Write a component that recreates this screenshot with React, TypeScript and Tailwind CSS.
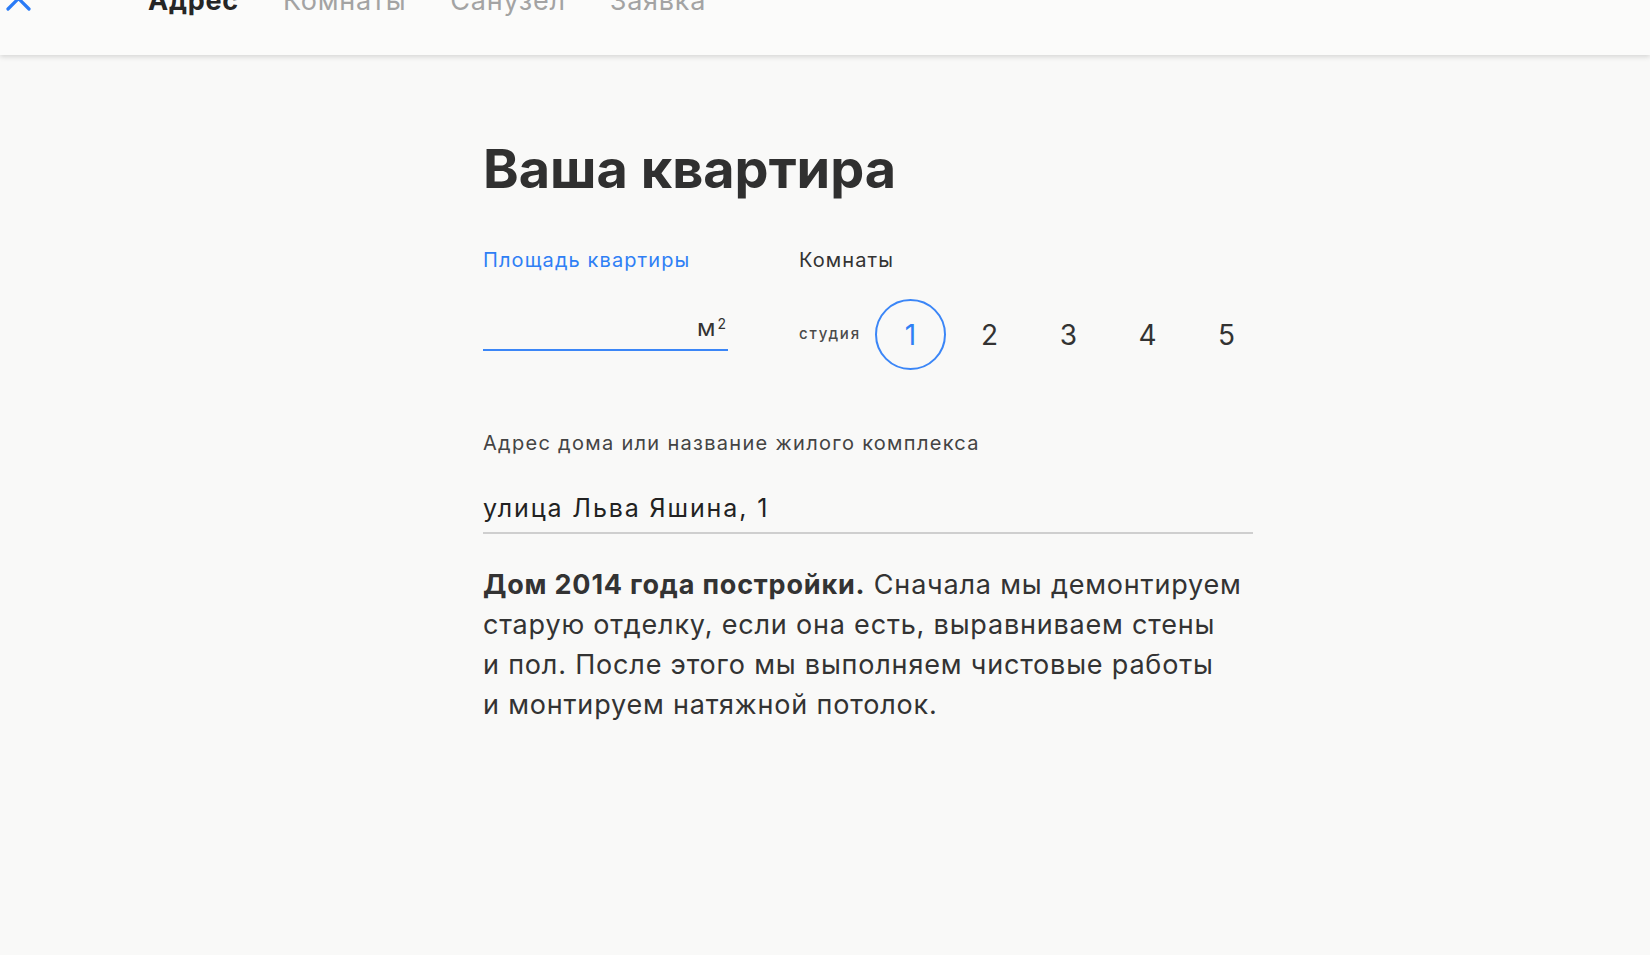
import React from "react";

const NAV = ["Адрес", "Комнаты", "Санузел", "Заявка"];
const ROOMS = ["1", "2", "3", "4", "5"];

function Header() {
  return (
    <header className="relative z-10 h-[55px] bg-[#fbfbfa] shadow-[0_2px_5px_rgba(0,0,0,0.14)] flex items-start">
      <svg
        className="ml-[5px] -mt-[15px] shrink-0"
        width="27"
        height="27"
        viewBox="0 0 27 27"
        fill="none"
        stroke="#2a7bf6"
        strokeWidth="3.2"
        strokeLinecap="round"
      >
        <path d="M3 3 L24 24 M24 3 L3 24" />
      </svg>
      <nav className="ml-[116px] -mt-[14px] flex gap-[44px] text-[27px] leading-[30px] tracking-[0.028em]">
        {NAV.map((item, i) => (
          <span
            key={item}
            className={i === 0 ? "font-bold text-[#262626]" : "text-[#a3a3a3]"}
          >
            {item}
          </span>
        ))}
      </nav>
    </header>
  );
}

function RoomPicker() {
  return (
    <div className="flex items-center shrink-0">
      <span className="text-[15px] font-medium tracking-[0.12em] text-[#4a4a4a] mr-[14px]">
        студия
      </span>
      <div className="flex gap-[8px]">
        {ROOMS.map((r) => (
          <button
            key={r}
            className={
              "w-[71px] h-[71px] rounded-full flex items-center justify-center text-[28px] " +
              (r === "1"
                ? "border-2 border-[#3b86f7] text-[#2f7ff5]"
                : "text-[#333]")
            }
          >
            {r}
          </button>
        ))}
      </div>
    </div>
  );
}

export default function App() {
  return (
    <div className="min-h-[955px] bg-[#f9f9f8] font-['Inter','Liberation_Sans',sans-serif] text-[#2e2e2e] overflow-hidden">
      <Header />
      <main className="pl-[483px] pt-[83px]">
        <div className="w-[770px] flex flex-col">
          <h1 className="text-[54px] leading-[62px] font-bold text-[#303030]">
            Ваша квартира
          </h1>

          <div className="mt-[48px] flex text-[20px] leading-[24px] tracking-[0.055em]">
            <span className="w-[316px] shrink-0 text-[#2f7ff5]">Площадь квартиры</span>
            <span className="text-[#333]">Комнаты</span>
          </div>

          <div className="mt-[27px] flex items-start">
            <div className="w-[245px] shrink-0 h-[52px] border-b-2 border-[#3b86f7] flex items-end justify-end pb-[9px] pr-[2px]">
              <span className="text-[24px] leading-[24px] text-[#333]">
                м<sup className="text-[14px] relative -top-[7px] ml-[2px]">2</sup>
              </span>
            </div>
            <div className="ml-[71px] shrink-0">
              <RoomPicker />
            </div>
          </div>

          <label className="mt-[61px] text-[20px] leading-[24px] tracking-[0.065em] text-[#444]">
            Адрес дома или название жилого комплекса
          </label>

          <div className="mt-[37px] pb-[8px] border-b-2 border-[#cfcfcf] text-[25px] leading-[32px] tracking-[0.075em] text-[#222]">
            улица Льва Яшина, 1
          </div>

          <p className="mt-[31px] text-[27px] leading-[40px] tracking-[0.03em] text-[#333]">
            <span className="block whitespace-nowrap">
              <b className="font-bold">Дом 2014 года постройки.</b> Сначала мы демонтируем
            </span>
            <span className="block whitespace-nowrap">
              старую отделку, если она есть, выравниваем стены
            </span>
            <span className="block whitespace-nowrap">
              и пол. После этого мы выполняем чистовые работы
            </span>
            <span className="block whitespace-nowrap">
              и монтируем натяжной потолок.
            </span>
          </p>
        </div>
      </main>
    </div>
  );
}
